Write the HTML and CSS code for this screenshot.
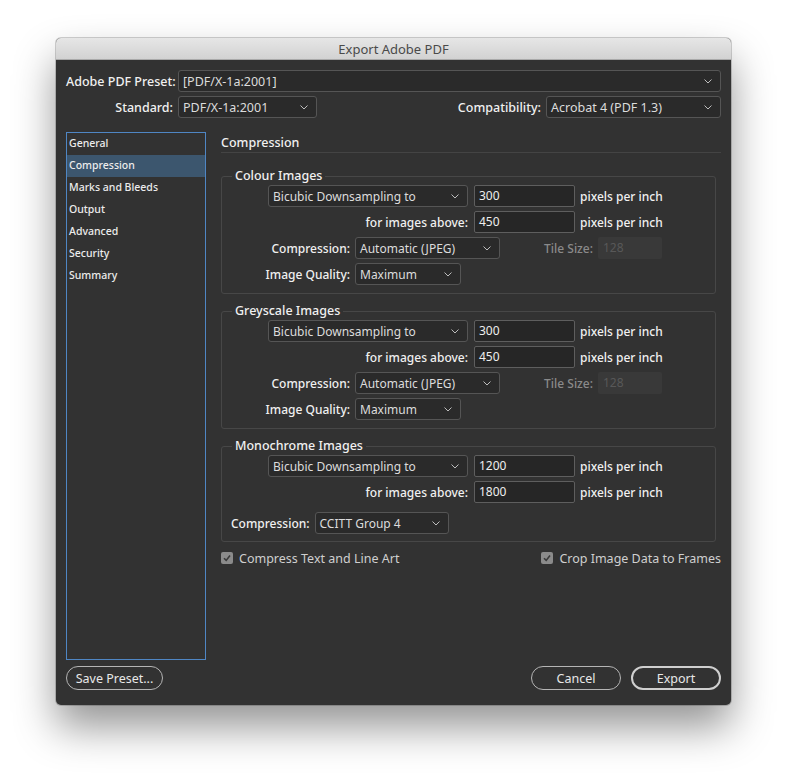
FILE: index.html
```html
<!DOCTYPE html>
<html>
<head>
<meta charset="utf-8">
<link rel="stylesheet" href="styles.css">
</head>
<body>
<div class="stage">
<div class="window">
  <div class="titlebar">Export Adobe PDF</div>
  <div class="body">
    <div class="row">
      <span class="lbl lbl-top">Adobe PDF Preset:</span>
      <div class="sel sel-preset"><span>[PDF/X-1a:2001]</span><svg class="chev" viewBox="0 0 8 5"><polyline points="0.5,0.5 4,4 7.5,0.5"/></svg></div>
    </div>
    <div class="row row2">
      <span class="lbl lbl-top">Standard:</span>
      <div class="sel sel-std"><span>PDF/X-1a:2001</span><svg class="chev" viewBox="0 0 8 5"><polyline points="0.5,0.5 4,4 7.5,0.5"/></svg></div>
      <span class="lbl lbl-compat">Compatibility:</span>
      <div class="sel sel-compat"><span>Acrobat 4 (PDF 1.3)</span><svg class="chev" viewBox="0 0 8 5"><polyline points="0.5,0.5 4,4 7.5,0.5"/></svg></div>
    </div>
    <div class="main">
      <ul class="sidebar">
        <li>General</li>
        <li class="active">Compression</li>
        <li>Marks and Bleeds</li>
        <li>Output</li>
        <li>Advanced</li>
        <li>Security</li>
        <li>Summary</li>
      </ul>
      <div class="panel">
        <div class="panel-head">Compression</div>

        <fieldset class="group">
          <legend>Colour Images</legend>
          <div class="grow">
            <div class="sel sel-down"><span>Bicubic Downsampling to</span><svg class="chev" viewBox="0 0 8 5"><polyline points="0.5,0.5 4,4 7.5,0.5"/></svg></div>
            <div class="inp">300</div><span class="unit">pixels per inch</span>
          </div>
          <div class="grow">
            <span class="lbl lbl-above">for images above:</span>
            <div class="inp">450</div><span class="unit">pixels per inch</span>
          </div>
          <div class="grow">
            <span class="lbl lbl-g">Compression:</span>
            <div class="sel sel-comp"><span>Automatic (JPEG)</span><svg class="chev" viewBox="0 0 8 5"><polyline points="0.5,0.5 4,4 7.5,0.5"/></svg></div>
            <span class="lbl lbl-dis">Tile Size:</span>
            <div class="inp inp-dis">128</div>
          </div>
          <div class="grow">
            <span class="lbl lbl-g">Image Quality:</span>
            <div class="sel sel-q"><span>Maximum</span><svg class="chev" viewBox="0 0 8 5"><polyline points="0.5,0.5 4,4 7.5,0.5"/></svg></div>
          </div>
        </fieldset>

        <fieldset class="group">
          <legend>Greyscale Images</legend>
          <div class="grow">
            <div class="sel sel-down"><span>Bicubic Downsampling to</span><svg class="chev" viewBox="0 0 8 5"><polyline points="0.5,0.5 4,4 7.5,0.5"/></svg></div>
            <div class="inp">300</div><span class="unit">pixels per inch</span>
          </div>
          <div class="grow">
            <span class="lbl lbl-above">for images above:</span>
            <div class="inp">450</div><span class="unit">pixels per inch</span>
          </div>
          <div class="grow">
            <span class="lbl lbl-g">Compression:</span>
            <div class="sel sel-comp"><span>Automatic (JPEG)</span><svg class="chev" viewBox="0 0 8 5"><polyline points="0.5,0.5 4,4 7.5,0.5"/></svg></div>
            <span class="lbl lbl-dis">Tile Size:</span>
            <div class="inp inp-dis">128</div>
          </div>
          <div class="grow">
            <span class="lbl lbl-g">Image Quality:</span>
            <div class="sel sel-q"><span>Maximum</span><svg class="chev" viewBox="0 0 8 5"><polyline points="0.5,0.5 4,4 7.5,0.5"/></svg></div>
          </div>
        </fieldset>

        <fieldset class="group group-mono">
          <legend>Monochrome Images</legend>
          <div class="grow">
            <div class="sel sel-down"><span>Bicubic Downsampling to</span><svg class="chev" viewBox="0 0 8 5"><polyline points="0.5,0.5 4,4 7.5,0.5"/></svg></div>
            <div class="inp">1200</div><span class="unit">pixels per inch</span>
          </div>
          <div class="grow">
            <span class="lbl lbl-above">for images above:</span>
            <div class="inp">1800</div><span class="unit">pixels per inch</span>
          </div>
          <div class="grow grow-mono">
            <span class="lbl lbl-mono">Compression:</span>
            <div class="sel sel-ccitt"><span>CCITT Group 4</span><svg class="chev" viewBox="0 0 8 5"><polyline points="0.5,0.5 4,4 7.5,0.5"/></svg></div>
          </div>
        </fieldset>

        <div class="checks">
          <label class="chk"><span class="box"><svg viewBox="0 0 12 12"><polyline points="3,6.2 5.2,8.4 9,3.6"/></svg></span>Compress Text and Line Art</label>
          <label class="chk"><span class="box"><svg viewBox="0 0 12 12"><polyline points="3,6.2 5.2,8.4 9,3.6"/></svg></span>Crop Image Data to Frames</label>
        </div>
      </div>
    </div>
    <div class="buttons">
      <button class="btn btn-save">Save Preset...</button>
      <div class="btn-right">
        <button class="btn">Cancel</button>
        <button class="btn btn-default">Export</button>
      </div>
    </div>
  </div>
</div>
</div>
</body>
</html>
```

FILE: styles.css
```css
html, body {
  margin: 0;
  padding: 0;
  background: #ffffff;
  height: 100%;
}
body {
  font-family: "Noto Sans", "Open Sans", sans-serif;
  font-size: 12px;
  color: #e6e6e6;
}
.stage {
  box-sizing: border-box;
  min-height: 780px;
  padding: 38px 0 0 56px;
}
.window {
  width: 675px;
  height: 667px;
  border-radius: 5px;
  background: #323232;
  box-shadow: 0 22px 42px rgba(0,0,0,0.42), 0 0 0 1px rgba(0,0,0,0.18);
  display: flex;
  flex-direction: column;
}
.titlebar {
  height: 22px;
  line-height: 22px;
  text-align: center;
  font-size: 13px;
  color: #4a4a4a;
  background: linear-gradient(#e6e6e6, #d2d2d2);
  border-bottom: 1px solid #a9a9a9;
  border-radius: 5px 5px 0 0;
  box-sizing: border-box;
}
.body {
  flex: 1;
  display: flex;
  flex-direction: column;
  padding: 10px 10px 15px 10px;
}
.row {
  display: flex;
  align-items: center;
  height: 22px;
}
.row2 {
  margin-top: 4px;
}
.lbl {
  white-space: nowrap;
  color: #f0f0f0;
  font-weight: 500;
}
.lbl-top {
  width: 107px;
  text-align: right;
  margin-right: 5px;
  font-size: 12.5px;
}
.lbl-compat {
  margin-left: auto;
  margin-right: 5px;
  font-size: 12.5px;
}
.sel {
  box-sizing: border-box;
  height: 22px;
  border: 1px solid #555555;
  border-radius: 3px;
  background: #2a2a2a;
  display: flex;
  align-items: center;
  padding: 0 8px 0 4px;
  color: #dcdcdc;
  white-space: nowrap;
}
.sel span {
  flex: 1;
}
.chev {
  width: 8px;
  height: 5px;
  flex: none;
  fill: none;
  stroke: #bdbdbd;
  stroke-width: 1;
}
.sel-preset { flex: 1; font-size: 12.5px; }
.sel-std { width: 139px; font-size: 12.5px; }
.sel-compat { width: 175px; font-size: 12.5px; }

.main {
  display: flex;
  margin-top: 14px;
  height: 528px;
}
.sidebar {
  list-style: none;
  margin: 0;
  padding: 0;
  width: 140px;
  box-sizing: border-box;
  border: 1px solid #4f86c4;
  font-size: 10.5px;
}
.sidebar li {
  height: 22px;
  line-height: 21px;
  padding-left: 2px;
  color: #ececec;
  font-weight: 500;
}
.sidebar li.active {
  background: #3c566e;
}
.panel {
  flex: 1;
  margin-left: 15px;
}
.panel-head {
  height: 20px;
  line-height: 21px;
  font-size: 12.5px;
  font-weight: 500;
  color: #f0f0f0;
  border-bottom: 1px solid #444444;
}
.group {
  margin: 9px 5px 0 0;
  padding: 1px 0 8px 0;
  border: 1px solid #474747;
  border-radius: 3px;
  min-width: 0;
}
.panel-head + .group {
  margin-top: 15px;
}
.group legend {
  margin-left: 10px;
  padding: 0 3px;
  line-height: 16px;
  font-size: 12.5px;
  font-weight: 500;
  color: #f0f0f0;
}
.grow {
  display: flex;
  align-items: center;
  height: 22px;
  margin-top: 4px;
}
.grow:first-of-type {
  margin-top: 0;
}
.group-mono .grow-mono {
  margin-top: 9px;
}
.group-mono {
  padding-bottom: 7px;
}
.sel-down {
  width: 200px;
  margin-left: 46px;
  margin-right: 6px;
}
.lbl-above {
  width: 246px;
  text-align: right;
  margin-right: 6px;
}
.lbl-g {
  width: 128px;
  text-align: right;
  margin-right: 5px;
}
.lbl-mono {
  margin-left: 9px;
  margin-right: 5px;
}
.sel-comp { width: 145px; }
.sel-q { width: 106px; }
.sel-ccitt { width: 134px; }
.inp {
  box-sizing: border-box;
  width: 101px;
  height: 22px;
  border: 1px solid #5e5e5e;
  border-radius: 2px;
  background: #262626;
  padding: 0 4px;
  line-height: 20px;
  color: #eeeeee;
}
.unit {
  margin-left: 5px;
  color: #f0f0f0;
  font-weight: 500;
}
.lbl-dis {
  color: #8a8a8a;
  margin-left: auto;
  margin-right: 5px;
  font-size: 12px;
}
.inp-dis {
  width: 64px;
  margin-right: 53px;
  border-color: transparent;
  background: #393939;
  color: #585858;
}
.checks {
  display: flex;
  justify-content: space-between;
  margin-top: 8px;
  height: 16px;
  align-items: center;
}
.chk {
  display: flex;
  align-items: center;
  color: #cfcfcf;
  font-size: 12.5px;
}
.box {
  width: 12px;
  height: 12px;
  border-radius: 2px;
  background: #8b8b8b;
  margin-right: 6px;
  display: flex;
}
.box svg {
  width: 12px;
  height: 12px;
  fill: none;
  stroke: #3a3a3a;
  stroke-width: 1.6;
}
.buttons {
  display: flex;
  justify-content: space-between;
  margin-top: 6px;
}
.btn-right {
  display: flex;
  gap: 10px;
}
.btn {
  font-family: inherit;
  font-size: 12.5px;
  height: 24px;
  width: 90px;
  border-radius: 12px;
  border: 1px solid #b5b5b5;
  background: transparent;
  color: #e8e8e8;
  padding: 0;
}
.btn-save {
  width: 97px;
}
.btn-default {
  border: 2px solid #cfcfcf;
}
```
